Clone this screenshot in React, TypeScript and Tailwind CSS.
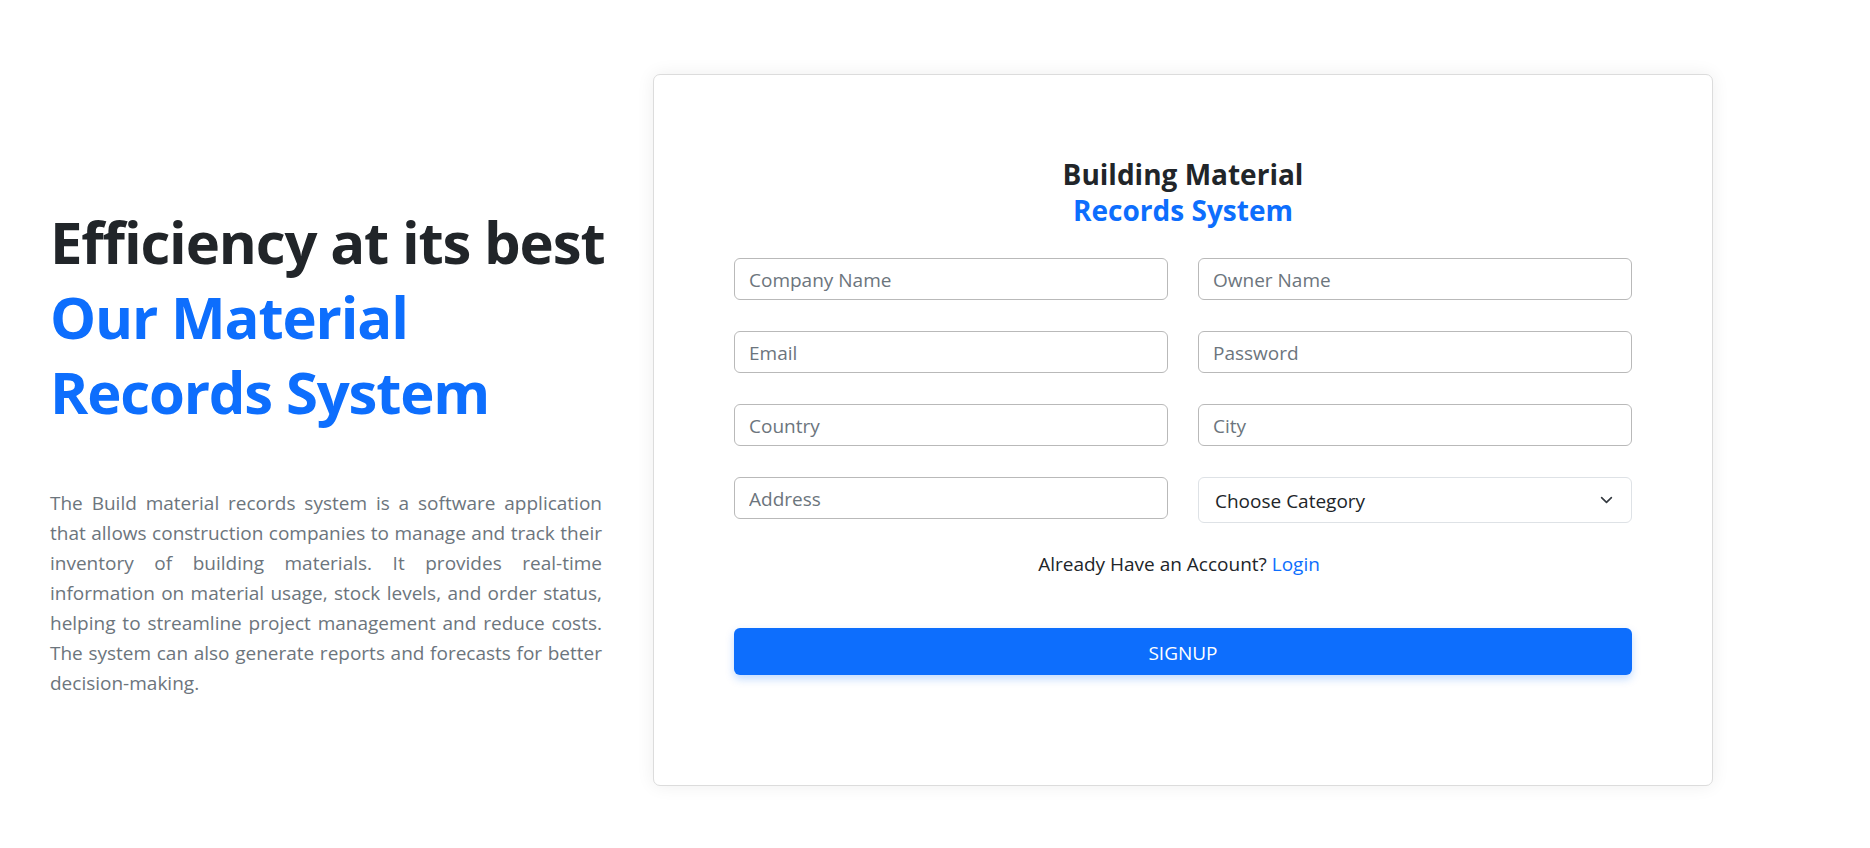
import React from "react";

const fields: string[][] = [
  ["Company Name", "Owner Name"],
  ["Email", "Password"],
  ["Country", "City"],
];

const inputCls =
  "w-full h-[42px] rounded-[6px] border border-[#b9b9b9] bg-white px-[14px] pt-[2px] text-[19px] text-[#212529] placeholder:text-[#6c757d] outline-none";

const App: React.FC = () => {
  return (
    <div className="min-h-[848px] w-full bg-white font-['Open_Sans',sans-serif]">
      <div className="flex items-start pl-[50px] pt-[74px] gap-[51px]">
        {/* left intro */}
        <div className="w-[552px] mt-[130px]">
          <h1 className="text-[58px] leading-[75px] font-bold tracking-[-0.02em] text-[#212529]">
            <span className="whitespace-nowrap">Efficiency at its best</span>
            <br />
            <span className="text-[#0d6efd]">
              Our Material
              <br />
              Records System
            </span>
          </h1>
          <p className="mt-[59px] text-[19px] leading-[30px] font-normal text-justify text-[#6c757d]">
            The Build material records system is a software application that allows construction
            companies to manage and track their inventory of building materials. It provides
            real-time information on material usage, stock levels, and order status, helping to
            streamline project management and reduce costs. The system can also generate reports
            and forecasts for better decision-making.
          </p>
        </div>

        {/* signup card */}
        <div className="w-[1060px] h-[712px] rounded-[7px] border border-[#dcdcdc] bg-white shadow-[0_0_18px_rgba(0,0,0,0.07)] px-[80px] pt-[81px]">
          <h3 className="text-center text-[28px] leading-[36px] font-bold text-[#212529]">
            Building Material
            <br />
            <span className="text-[#0d6efd]">Records System</span>
          </h3>

          <form className="mt-[30px]" onSubmit={(e) => e.preventDefault()}>
            <div className="grid grid-cols-2 gap-x-[30px] gap-y-[31px] items-start">
              {fields.flat().map((f) => (
                <input
                  key={f}
                  type={f === "Password" ? "password" : "text"}
                  placeholder={f}
                  className={inputCls}
                />
              ))}
              <input type="text" placeholder="Address" className={inputCls} />
              <div className="relative">
                <select
                  defaultValue=""
                  className="w-full h-[46px] appearance-none rounded-[6px] border border-[#dee2e6] bg-white pl-[16px] pr-[40px] pt-[2px] text-[19px] text-[#212529] outline-none"
                >
                  <option value="">Choose Category</option>
                  <option value="cement">Cement</option>
                  <option value="steel">Steel</option>
                  <option value="bricks">Bricks</option>
                </select>
                <svg
                  className="pointer-events-none absolute right-[17px] top-1/2 -translate-y-1/2"
                  width="17"
                  height="13"
                  viewBox="0 0 16 16"
                  fill="none"
                  stroke="#343a40"
                  strokeWidth="2"
                  strokeLinecap="round"
                  strokeLinejoin="round"
                >
                  <path d="m2 5 6 6 6-6" />
                </svg>
              </div>
            </div>

            <p className="mt-[28px] pr-[8px] text-center text-[19px] leading-[27px] text-[#212529]">
              Already Have an Account?{" "}
              <a href="#" className="text-[#0d6efd]">
                Login
              </a>
            </p>

            <button
              type="submit"
              className="mt-[50px] w-full h-[47px] rounded-[6px] bg-[#0d6efd] pt-[3px] text-[19px] text-white uppercase shadow-[0_4px_8px_rgba(13,110,253,0.25)]"
            >
              Signup
            </button>
          </form>
        </div>
      </div>
    </div>
  );
};

export default App;
